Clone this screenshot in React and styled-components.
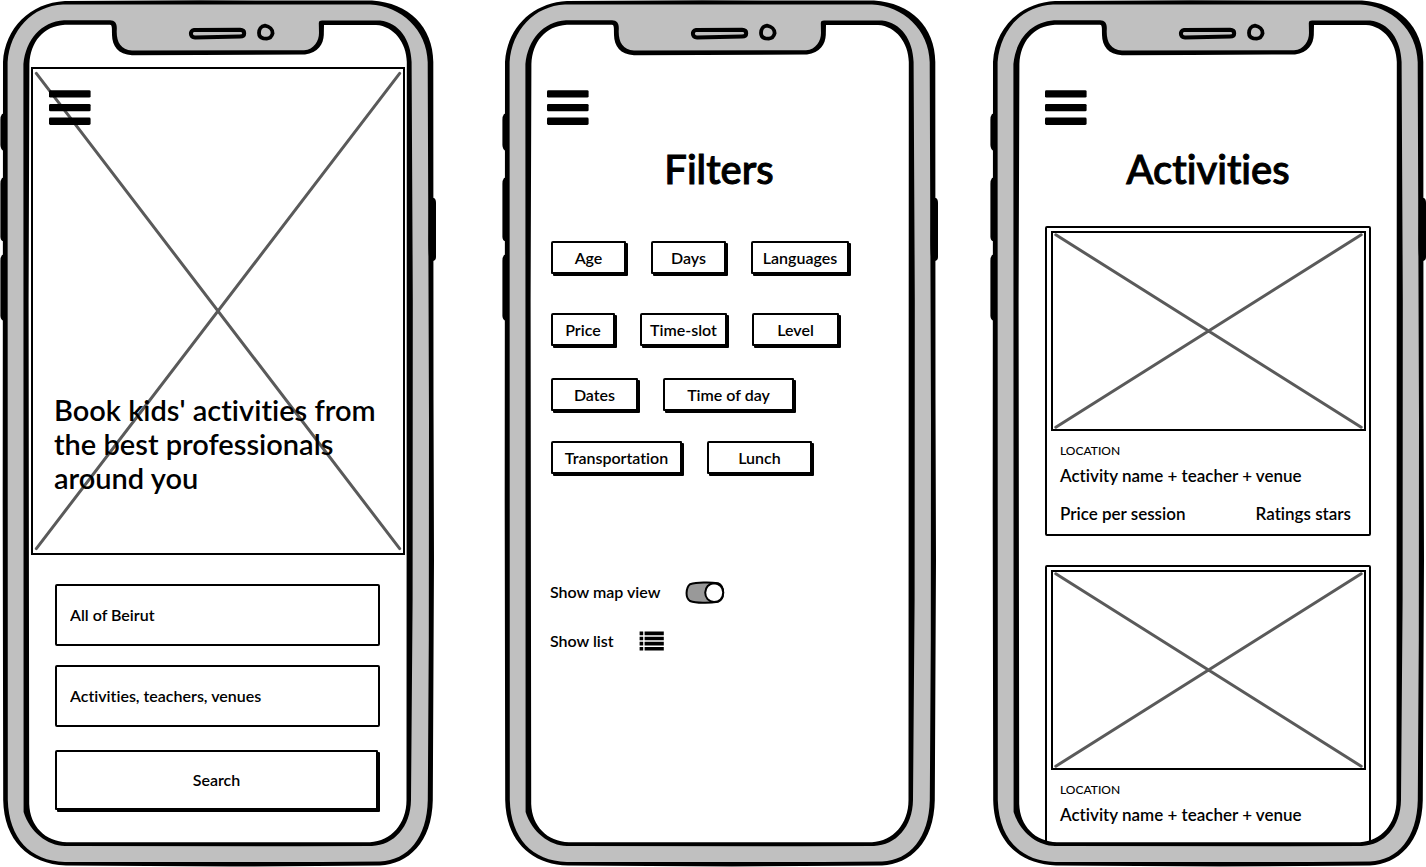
import React from "react";
import styled, { createGlobalStyle } from "styled-components";

const ink = "#000";
const paper = "#fff";

const GlobalStyle = createGlobalStyle`
  *, *::before, *::after { box-sizing: border-box; }
  body {
    margin: 0;
    background: ${paper};
    color: ${ink};
    font-family: Lato, "Open Sans", sans-serif;
    font-size: 16px;
    font-weight: 600;
    line-height: 20px;
    font-variant-ligatures: none;
  }
  button, input { font: inherit; color: inherit; }
`;

const Board = styled.main`
  display: grid;
  grid-template-columns: 502fr 488fr 436fr;
  align-items: start;
`;

const PhoneShell = styled.section`
  position: relative;
  width: 100%;
  max-width: 436px;
  aspect-ratio: 436 / 867;
  overflow: hidden;
`;

const FrameArt = styled.svg`
  position: absolute;
  inset: 0;
  width: 100%;
  height: 100%;
  pointer-events: none;
`;

const Screen = styled.div`
  display: flex;
  flex-direction: column;
  height: 100%;
  min-height: 0;
  padding: ${(p) => p.$padding};
`;

const MenuButton = styled.button`
  display: flex;
  flex: none;
  padding: 0;
  border: 0;
  background: none;
  cursor: pointer;
`;

const Title = styled.h1`
  margin: 19px 0 0;
  font-size: 40px;
  line-height: 48px;
  font-weight: 500;
  text-align: center;
  -webkit-text-stroke: 1px ${ink};
`;

const Hero = styled.div`
  position: relative;
  display: flex;
  flex: 1;
  flex-direction: column;
  justify-content: space-between;
  align-items: flex-start;
  padding: 21px 16px 58px;
  border: 2px solid ${ink};
`;

const HeroText = styled.h2`
  position: relative;
  margin: 0 0 0 5px;
  font-size: 29px;
  line-height: 34px;
  font-weight: 600;
`;

const HeroMenu = styled(MenuButton)`
  position: relative;
`;

const CrossArt = styled.svg`
  position: absolute;
  inset: 0;
  width: 100%;
  height: 100%;
`;

const SearchForm = styled.form`
  display: flex;
  flex-direction: column;
  padding: 29px 25px 0 24px;
`;

const Field = styled.input`
  width: 100%;
  height: 62px;
  margin-bottom: ${(p) => p.$gap};
  padding: 0 13px 2px;
  border: 2px solid ${ink};
  border-radius: 2px;
  background: ${paper};
  outline: none;
`;

const RaisedButton = styled.button`
  border: 2px solid ${ink};
  border-radius: 2px 1px 1px 1px;
  background: ${paper};
  box-shadow: 2px 2px 0 ${ink};
  cursor: pointer;
`;

const SearchButton = styled(RaisedButton)`
  height: 60px;
  margin-right: 2px;
`;

const FilterRow = styled.div`
  display: flex;
  gap: 25px;
  padding: 0 4px;
  margin-top: ${(p) => p.$above};
`;

const FilterButton = styled(RaisedButton)`
  flex: none;
  width: ${(p) => p.$width};
  height: 33px;
  padding: 0;
`;

const OptionRow = styled.label`
  display: flex;
  align-items: center;
  gap: 25px;
  height: 24px;
  padding: 0 3px;
  margin-top: ${(p) => p.$above};
`;

const Toggle = styled.span`
  display: grid;
  width: 40px;
  height: 24px;

  & > * { grid-area: 1 / 1; }
`;

const ToggleInput = styled.input`
  width: 100%;
  height: 100%;
  margin: 0;
  opacity: 0;
  cursor: pointer;
`;

const CardList = styled.ul`
  display: flex;
  flex: 1;
  flex-direction: column;
  gap: 29px;
  min-height: 0;
  margin: 33px 0 0;
  padding: 0;
  overflow: hidden;
  list-style: none;
`;

const Card = styled.li`
  display: flex;
  flex: none;
  flex-direction: column;
  height: 310px;
  padding: 3px 3px 3px 4px;
  border: 2px solid ${ink};
  border-radius: 2px;
`;

const CardPhoto = styled.div`
  position: relative;
  height: 200px;
  border: 2px solid ${ink};
`;

const CardBody = styled.div`
  display: flex;
  flex-direction: column;
  padding: 10px 15px 0 9px;
  font-size: 17px;
`;

const CardPlace = styled.span`
  font-size: 12px;
  font-weight: 500;
`;

const CardName = styled.span`
  margin-top: 5px;
`;

const CardFooter = styled.div`
  display: flex;
  justify-content: space-between;
  margin-top: 18px;
`;

function Frame() {
  return (
    <FrameArt viewBox="0 0 436 867" preserveAspectRatio="none" aria-hidden="true">
      <path
        fillRule="evenodd"
        fill="#000"
        d="M65 1 L200 .3 L372 .6 C409 3 433 27 433.3 62 L433.5 400 L434 560 L432.8 800 C432 843 408 864 380 865.4 L230 866.6 L66 865.5 C28 864 4 840 3.2 800 L2.7 500 L3 62 C5 28 30 3 65 1 Z
           M65 24.7 L110 24.7 C112 25 112 27 112 35 C112.3 46 118 54.5 132 55.2 L200 55 L305 54.5 C318 53 323.4 44 323.8 35 L324 25 L376 25 C394 26 406.5 43 406.8 62 L406.5 800 C406.5 824 391 841 370 842.3 L67 842.3 C45 841.5 30 826 29.2 804 L28.6 300 L29.4 64 C30.5 42 43 26 65 24.7 Z"
      />
      <path
        fillRule="evenodd"
        fill="#c0c0c0"
        d="M63 4.4 L370 4.4 C401 5.5 427.2 30 427.7 62 L428.2 200 L429 420 L428.8 640 L427.8 800 C427 838 408 860 380 861.6 L320 862 L65 862 C30 861 8.8 838 7.8 800 L7.6 62 C10 30 32 6 63 4.4 Z
           M64 20.2 L110 20.2 C115 20.5 117 23 116.8 29 C116 41 120 50 132 50.5 L304 50.3 C314 49.5 319 41 319 33 L318.8 23 C319 21 320 20.4 322 20.4 L380 20.6 C399 22.5 411 40 411.6 62 L412.8 300 L412.6 600 L411 800 C410.5 827 394 845 372 846 L300 846.2 L65 846 C47 845.5 30 832 23.6 812 L23.4 64 C26 39 41 22 64 20.2 Z"
      />
      <path
        fill="none"
        stroke="#000"
        strokeWidth="4"
        strokeLinejoin="round"
        d="M194 30 L240 29.8 C245.6 30 245.6 36.4 240 36.6 L195 37.4 C189.8 37.4 189.6 30.6 194 30 Z"
      />
      <path
        fill="none"
        stroke="#000"
        strokeWidth="3.8"
        strokeLinejoin="round"
        d="M265 25.6 C269.5 26.3 272.8 29.5 272.6 33.4 C271.8 36.6 269.6 38.4 266.8 38.6 L263.4 38.4 C260 37.6 259 36 259 33 C259 29.4 261 26 265 25.6 Z"
      />
      <path
        fill="#000"
        d="M4 113.5 L2 114 Q.4 116 .4 120 L.4 145 Q.6 150 4 151 Z
           M4 177.5 L2 178 Q.4 180 .4 184 L.4 237 Q.6 241 4 241.6 Z
           M4 254.5 L2 255 Q.4 257 .4 261 L.4 316 Q.6 320 4 321 Z
           M429 197.5 L434 198 Q436 199 436 203 L436 257 Q436 260.6 433 261 L430 261 Q428.4 258 428.4 240 Z"
      />
    </FrameArt>
  );
}

function Cross() {
  return (
    <CrossArt viewBox="0 0 100 100" preserveAspectRatio="none" aria-hidden="true">
      <path
        d="M.9 .9 L99.1 99.1 M99.1 .9 L.9 99.1"
        fill="none"
        stroke="#5a5a5a"
        strokeWidth="3"
        strokeLinecap="round"
        vectorEffect="non-scaling-stroke"
      />
    </CrossArt>
  );
}

function MenuIcon() {
  return (
    <svg width="42" height="36" viewBox="0 0 42 36" aria-hidden="true">
      <rect x="0" y="0.2" width="41.6" height="7.4" rx="1.4" />
      <rect x="0" y="13.9" width="41.6" height="7.4" rx="1.4" />
      <rect x="0" y="27.6" width="41.6" height="7.4" rx="1.4" />
    </svg>
  );
}

function ListIcon() {
  return (
    <svg width="25" height="20" viewBox="0 0 25 20" aria-hidden="true">
      {[0.6, 5.7, 10.8, 16].map((y) => (
        <path key={y} d={`M.6 ${y} H4.2 V${y + 3.6} H.6 Z M5.6 ${y} H24.8 V${y + 3.6} H5.6 Z`} />
      ))}
    </svg>
  );
}

function ToggleIcon() {
  return (
    <svg width="40" height="24" viewBox="0 -1 40 24" aria-hidden="true">
      <path
        d="M5 3.2 C12 1.2 25 1 33 2.2 C36.5 3.6 38.2 7.5 38.2 12 C38 16.6 36 19.8 33 20.8 C24 22.4 11 22.2 5 20 C2.2 18 1.4 15 1.6 11.6 C1.8 8 2.6 5 5 3.2 Z"
        fill="#999"
        stroke="#000"
        strokeWidth="2"
      />
      <path
        d="M29 2.2 C34.5 2.2 38.2 6.6 38.2 11.6 C38.2 17 34.5 21 29 21 C23.6 20.8 20.2 16.8 20.2 11.6 C20.4 6.4 23.8 2.4 29 2.2 Z"
        fill="#fff"
        stroke="#000"
        strokeWidth="2"
      />
    </svg>
  );
}

function Phone({ padding, label, children }) {
  return (
    <PhoneShell aria-label={label}>
      <Screen $padding={padding}>{children}</Screen>
      <Frame />
    </PhoneShell>
  );
}

const filterRows = [
  { above: "48px", items: [["Age", "75px"], ["Days", "75px"], ["Languages", "98px"]] },
  { above: "39px", items: [["Price", "64px"], ["Time-slot", "87px"], ["Level", "87px"]] },
  { above: "32px", items: [["Dates", "87px"], ["Time of day", "131px"]] },
  { above: "30px", items: [["Transportation", "131px"], ["Lunch", "105px"]] },
];

const activities = [
  { id: 1, price: "Price per session", rating: "Ratings stars" },
  { id: 2 },
];

export default function App() {
  return (
    <>
      <GlobalStyle />
      <Board>
        <Phone padding="67px 31px 57px" label="Home">
          <Hero>
            <Cross />
            <HeroMenu type="button" aria-label="Menu">
              <MenuIcon />
            </HeroMenu>
            <HeroText>Book kids' activities from the best professionals around you</HeroText>
          </Hero>
          <SearchForm onSubmit={(e) => e.preventDefault()}>
            <Field type="text" aria-label="Area" defaultValue="All of Beirut" $gap="19px" />
            <Field
              type="text"
              aria-label="What to look for"
              defaultValue="Activities, teachers, venues"
              $gap="23px"
            />
            <SearchButton type="submit">Search</SearchButton>
          </SearchForm>
        </Phone>

        <Phone padding="90px 47px 24px 45px" label="Filters">
          <MenuButton type="button" aria-label="Menu">
            <MenuIcon />
          </MenuButton>
          <Title>Filters</Title>
          {filterRows.map((row) => (
            <FilterRow key={row.above} $above={row.above}>
              {row.items.map(([name, width]) => (
                <FilterButton key={name} type="button" $width={width}>
                  {name}
                </FilterButton>
              ))}
            </FilterRow>
          ))}
          <OptionRow $above="106px">
            Show map view
            <Toggle>
              <ToggleIcon />
              <ToggleInput type="checkbox" role="switch" defaultChecked />
            </Toggle>
          </OptionRow>
          <OptionRow as="div" $above="25px">
            Show list
            <MenuButton type="button" aria-label="Show list">
              <ListIcon />
            </MenuButton>
          </OptionRow>
        </Phone>

        <Phone padding="90px 55px 22px" label="Activities">
          <MenuButton type="button" aria-label="Menu">
            <MenuIcon />
          </MenuButton>
          <Title>Activities</Title>
          <CardList>
            {activities.map(({ id, price, rating }) => (
              <Card key={id}>
                <CardPhoto>
                  <Cross />
                </CardPhoto>
                <CardBody>
                  <CardPlace>LOCATION</CardPlace>
                  <CardName>Activity name + teacher + venue</CardName>
                  {price && (
                    <CardFooter>
                      <span>{price}</span>
                      <span>{rating}</span>
                    </CardFooter>
                  )}
                </CardBody>
              </Card>
            ))}
          </CardList>
        </Phone>
      </Board>
    </>
  );
}
